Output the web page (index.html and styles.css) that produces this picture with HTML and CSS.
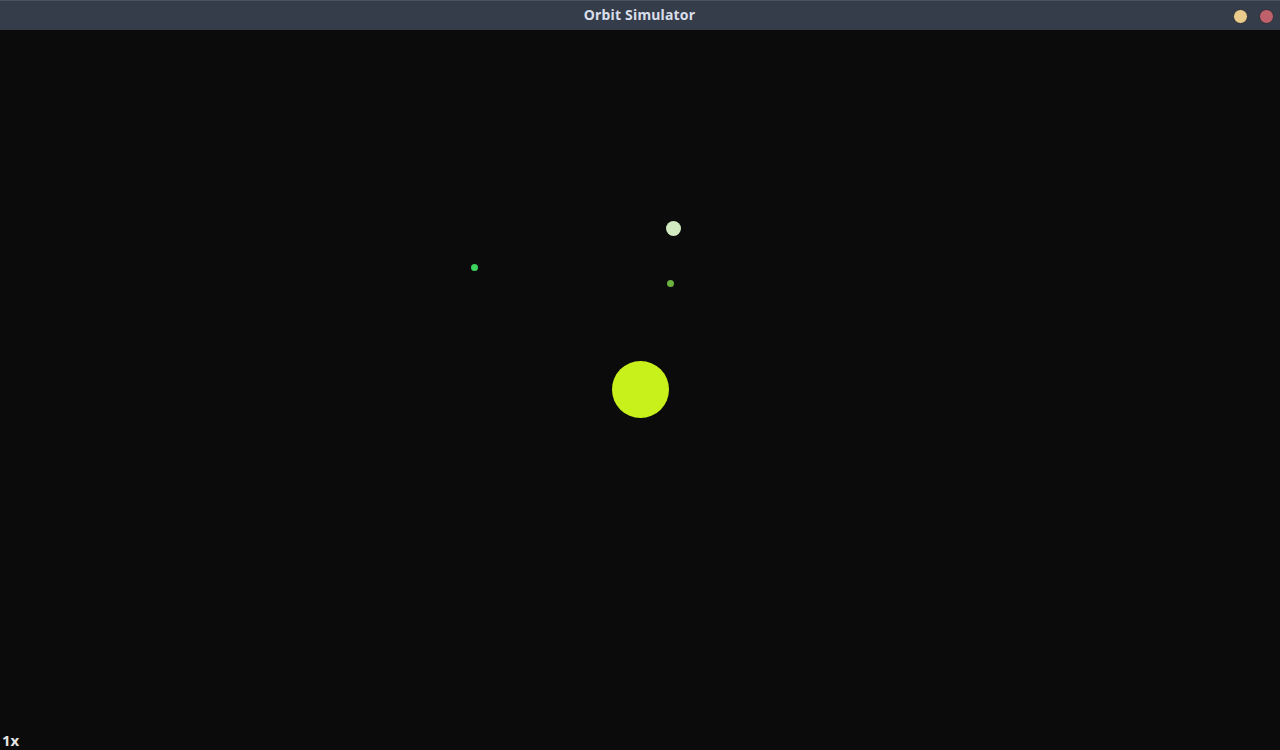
FILE: index.html
```html
<!DOCTYPE html>
<html>
<head>
<meta charset="utf-8">
<title>Orbit Simulator</title>
<link rel="stylesheet" href="styles.css">
</head>
<body>
<div class="window">
  <header class="titlebar">
    <div class="title">Orbit Simulator</div>
    <div class="controls">
      <span class="btn btn-min"></span>
      <span class="btn btn-close"></span>
    </div>
  </header>
  <main class="stage">
    <svg class="space" width="1280" height="720" viewBox="0 0 1280 720">
      <circle cx="640.5" cy="359.5" r="28.5" fill="#c8f11c"/>
      <circle cx="673.5" cy="198.5" r="7.5" fill="#d3ebc1"/>
      <circle cx="670.5" cy="253.5" r="3.5" fill="#6ab13f"/>
      <circle cx="474.5" cy="237.5" r="3.5" fill="#3dd15e"/>
    </svg>
    <div class="speed">1x</div>
  </main>
</div>
</body>
</html>
```
FILE: styles.css
```css
html, body {
  margin: 0;
  padding: 0;
  background: #0b0b0b;
  overflow: hidden;
}
.window {
  width: 1280px;
  height: 750px;
  display: flex;
  flex-direction: column;
}
.titlebar {
  height: 30px;
  box-sizing: border-box;
  background: #353c4a;
  border-top: 1px solid #4a5160;
  padding-bottom: 2px;
  position: relative;
  display: flex;
  align-items: center;
  justify-content: center;
  flex: none;
}
.title {
  font-family: "Noto Sans", "DejaVu Sans", sans-serif;
  font-weight: 700;
  font-size: 14px;
  letter-spacing: 0.2px;
  margin-left: -1px;
  color: #d8dee9;
}
.controls {
  position: absolute;
  right: 6px;
  top: 8px;
  display: flex;
  gap: 11px;
}
.btn {
  width: 15px;
  height: 15px;
  border-radius: 50%;
  box-sizing: border-box;
  border: 1px solid #2a2f38;
}
.btn-min { background: #ebcb8b; }
.btn-close { background: #bf616a; }
.stage {
  flex: 1;
  position: relative;
  background: #0b0b0b;
}
.space {
  display: block;
}
.speed {
  position: absolute;
  left: 2px;
  bottom: 0;
  font-family: "Noto Sans", "DejaVu Sans", sans-serif;
  font-weight: 700;
  font-size: 15px;
  line-height: 20px;
  color: #e5e5e5;
}
```
